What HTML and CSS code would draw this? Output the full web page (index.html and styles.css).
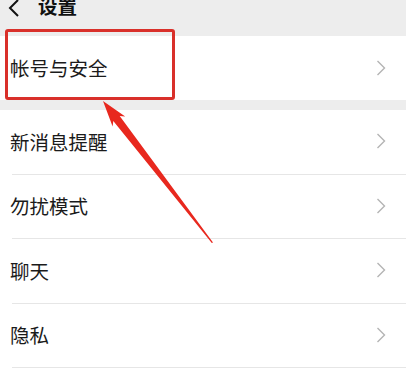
FILE: index.html
```html
<!DOCTYPE html>
<html lang="zh-CN">
<head>
<meta charset="utf-8">
<title>设置</title>
<link rel="stylesheet" href="styles.css">
</head>
<body>
<div class="page">
  <header class="topbar">
    <svg class="back" width="12" height="18" viewBox="0 0 12 18"><polyline points="10,1 2,9 10,17" fill="none" stroke="#111" stroke-width="2"/></svg>
    <span class="title">设置</span>
  </header>

  <section class="group">
    <div class="row"><span class="label">帐号与安全</span><svg class="chev" width="10" height="16" viewBox="0 0 10 16"><polyline points="1.5,1 8.5,8 1.5,15" fill="none" stroke="#b4b4b4" stroke-width="1.4"/></svg></div>
  </section>

  <section class="group group-list">
    <div class="row"><span class="label">新消息提醒</span><svg class="chev" width="10" height="16" viewBox="0 0 10 16"><polyline points="1.5,1 8.5,8 1.5,15" fill="none" stroke="#b4b4b4" stroke-width="1.4"/></svg></div>
    <div class="row"><span class="label">勿扰模式</span><svg class="chev" width="10" height="16" viewBox="0 0 10 16"><polyline points="1.5,1 8.5,8 1.5,15" fill="none" stroke="#b4b4b4" stroke-width="1.4"/></svg></div>
    <div class="row"><span class="label">聊天</span><svg class="chev" width="10" height="16" viewBox="0 0 10 16"><polyline points="1.5,1 8.5,8 1.5,15" fill="none" stroke="#b4b4b4" stroke-width="1.4"/></svg></div>
    <div class="row"><span class="label">隐私</span><svg class="chev" width="10" height="16" viewBox="0 0 10 16"><polyline points="1.5,1 8.5,8 1.5,15" fill="none" stroke="#b4b4b4" stroke-width="1.4"/></svg></div>
  </section>

  <div class="highlight"></div>
  <svg class="arrow" width="406" height="379" viewBox="0 0 406 379">
    <polygon fill="#e8281e" points="103,101 125.2,116.6 119.7,115.9 213,242.5 211.8,243 113.3,120.9 112.6,126.4"/>
  </svg>
</div>
</body>
</html>
```

FILE: styles.css
```css
html, body {
  margin: 0;
  padding: 0;
}
body {
  background: #ededed;
  font-family: "Noto Sans CJK SC", "Noto Sans", sans-serif;
  color: #1b1b1b;
  overflow: hidden;
}
.page {
  position: relative;
  width: 406px;
  height: 379px;
  overflow: hidden;
}
.topbar {
  height: 36px;
  display: flex;
  align-items: flex-start;
  padding-left: 8px;
  box-sizing: border-box;
}
.back {
  margin-top: -1px;
}
.title {
  margin-left: 18px;
  margin-top: -7px;
  font-size: 19.5px;
  line-height: 26px;
  font-weight: 700;
  color: #111;
}
.group {
  background: #fff;
  padding-left: 12px;
}
.group-list {
  margin-top: 10px;
  height: 300px;
}
.row {
  height: 64px;
  display: flex;
  align-items: center;
  justify-content: space-between;
  padding-right: 20px;
  box-sizing: border-box;
}
.group-list .row {
  height: 64.5px;
  border-bottom: 1px solid #e6e6e6;
}
.label {
  margin-left: -2px;
  font-size: 19.5px;
  line-height: 26px;
  color: #1b1b1b;
}
.chev {
  display: block;
  margin-top: -1px;
}
.highlight {
  position: absolute;
  left: 5px;
  top: 29px;
  width: 170px;
  height: 71px;
  border: 3px solid #d9302a;
  border-radius: 3px;
  box-sizing: border-box;
}
.arrow {
  position: absolute;
  left: 0;
  top: 0;
}
```
